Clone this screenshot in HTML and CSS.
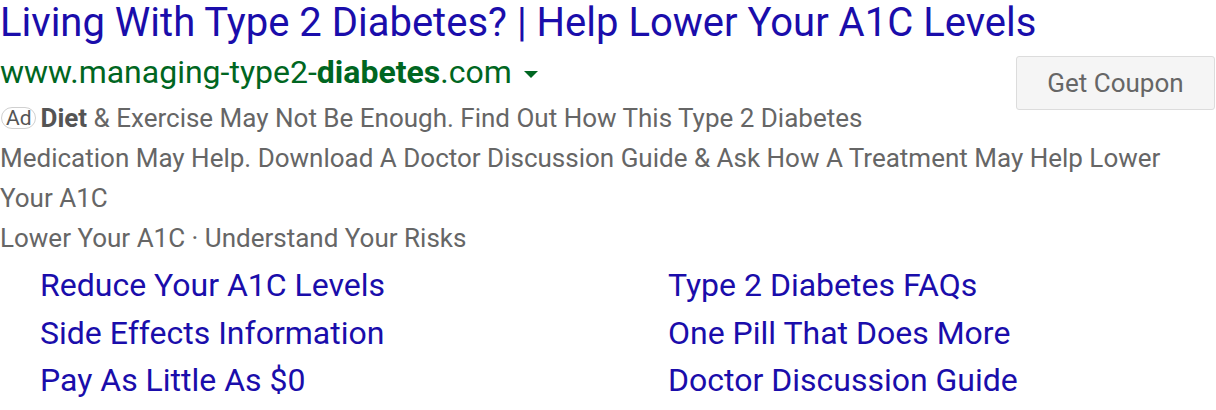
FILE: index.html
```html
<!DOCTYPE html>
<html>
<head>
<meta charset="utf-8">
<link rel="stylesheet" href="styles.css">
</head>
<body>
<div class="ad">
  <div class="title">Living With Type 2 Diabetes? | Help Lower Your A1C Levels</div>
  <div class="main">
    <span class="btn">Get Coupon</span>
    <div class="url">www.managing-type2-<b>diabetes</b>.com <span class="caret"></span></div>
    <div class="desc"><span class="badge">Ad</span><b>Diet</b> &amp; Exercise May Not Be Enough. Find Out How This Type 2 Diabetes Medication May Help. Download A Doctor Discussion Guide &amp; Ask How A Treatment May Help Lower Your A1C</div>
    <div class="desc">Lower Your A1C · Understand Your Risks</div>
  </div>
  <div class="links">
    <a>Reduce Your A1C Levels</a>
    <a>Type 2 Diabetes FAQs</a>
    <a>Side Effects Information</a>
    <a>One Pill That Does More</a>
    <a>Pay As Little As $0</a>
    <a>Doctor Discussion Guide</a>
  </div>
</div>
</body>
</html>
```
FILE: styles.css
```css
body {
  margin: 0;
  background: #fff;
  font-family: Roboto, "Liberation Sans", sans-serif;
}
.ad {
  width: 1216px;
}
.title {
  color: #1a0dab;
  font-size: 40px;
  line-height: 46px;
  white-space: nowrap;
}
.main {
  width: 1170px;
  margin-right: 46px;
  position: relative;
}
.url {
  color: #006621;
  font-size: 32px;
  line-height: 52px;
  white-space: nowrap;
}
.url b { font-weight: 700; }
.caret {
  display: inline-block;
  width: 0;
  height: 0;
  border-left: 7px solid transparent;
  border-right: 7px solid transparent;
  border-top: 7px solid #006621;
  vertical-align: middle;
  margin-left: 4px;
}
.desc {
  color: #666;
  font-size: 26px;
  line-height: 40px;
}
.desc b { color: #545454; }
.badge {
  display: inline-block;
  border: 1px solid #d0d0d0;
  border-radius: 11px;
  font-size: 21px;
  line-height: 20px;
  padding: 0 3px 0 4px;
  color: #555;
  margin: 0 5px 0 1px;
  vertical-align: 2px;
}
.btn {
  float: right;
  margin: 10px -45px 10px 30px;
  width: 199px;
  height: 54px;
  box-sizing: border-box;
  background: #f5f5f5;
  border: 1px solid #dcdcdc;
  border-radius: 3px;
  color: #666;
  font-size: 26px;
  display: flex;
  align-items: center;
  justify-content: center;
}
.links {
  display: grid;
  grid-template-columns: 628px auto;
  padding-left: 40px;
  padding-top: 4px;
}
.links a {
  color: #1a0dab;
  font-size: 32px;
  line-height: 47.5px;
}
```
